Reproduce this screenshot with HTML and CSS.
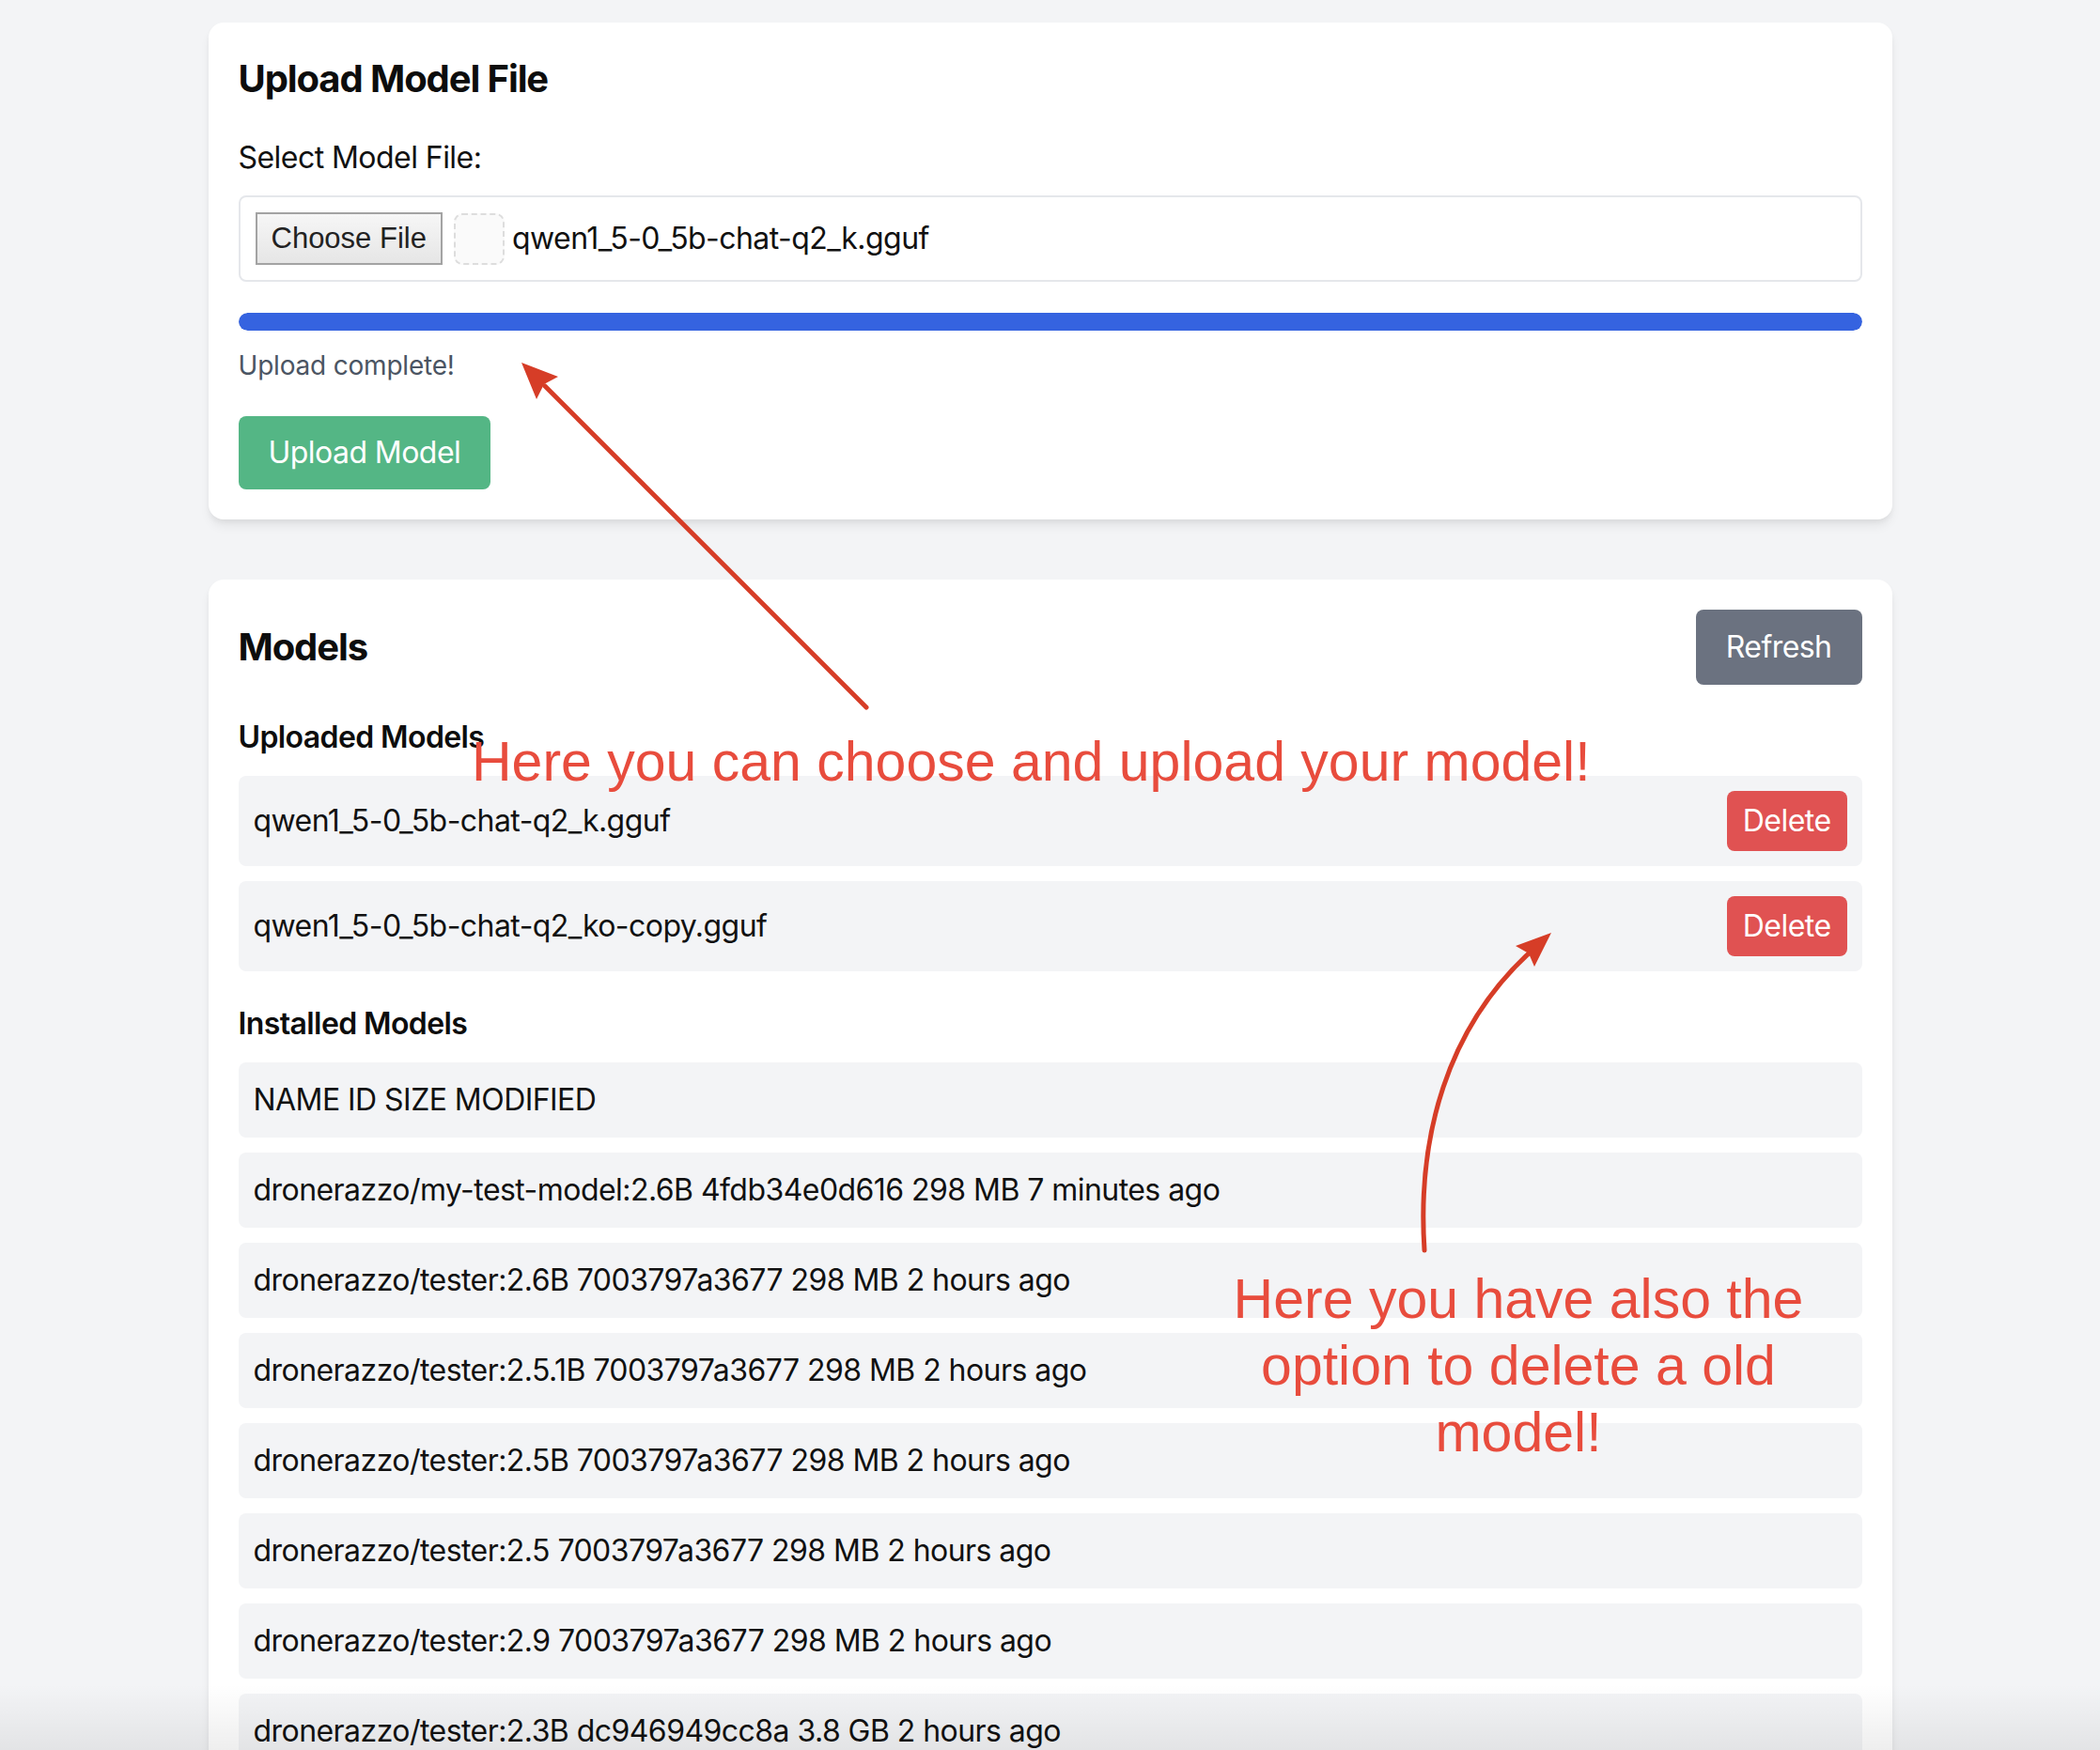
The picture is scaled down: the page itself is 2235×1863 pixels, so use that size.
FILE: index.html
```html
<!DOCTYPE html>
<html lang="en">
<head>
<meta charset="utf-8">
<title>Model Manager</title>
<link rel="stylesheet" href="styles.css">
</head>
<body>
<main class="container">
  <section class="card card-upload">
    <h2 class="card-title">Upload Model File</h2>
    <label class="field-label">Select Model File:</label>
    <div class="file-input">
      <span class="file-btn">Choose File</span>
      <span class="file-icon"></span>
      <span class="file-name">qwen1_5-0_5b-chat-q2_k.gguf</span>
    </div>
    <div class="progress"><div class="progress-fill" style="width:100%"></div></div>
    <p class="status">Upload complete!</p>
    <button class="btn btn-green">Upload Model</button>
  </section>

  <section class="card card-models">
    <div class="card-header">
      <h2 class="card-title">Models</h2>
      <button class="btn btn-gray">Refresh</button>
    </div>

    <div class="section">
      <h3 class="section-title">Uploaded Models</h3>
      <ul class="list">
        <li class="row row-action"><span>qwen1_5-0_5b-chat-q2_k.gguf</span><button class="btn-delete">Delete</button></li>
        <li class="row row-action"><span>qwen1_5-0_5b-chat-q2_ko-copy.gguf</span><button class="btn-delete">Delete</button></li>
      </ul>
    </div>

    <div class="section">
      <h3 class="section-title">Installed Models</h3>
      <ul class="list">
        <li class="row">NAME ID SIZE MODIFIED</li>
        <li class="row">dronerazzo/my-test-model:2.6B 4fdb34e0d616 298 MB 7 minutes ago</li>
        <li class="row">dronerazzo/tester:2.6B 7003797a3677 298 MB 2 hours ago</li>
        <li class="row">dronerazzo/tester:2.5.1B 7003797a3677 298 MB 2 hours ago</li>
        <li class="row">dronerazzo/tester:2.5B 7003797a3677 298 MB 2 hours ago</li>
        <li class="row">dronerazzo/tester:2.5 7003797a3677 298 MB 2 hours ago</li>
        <li class="row">dronerazzo/tester:2.9 7003797a3677 298 MB 2 hours ago</li>
        <li class="row">dronerazzo/tester:2.3B dc946949cc8a 3.8 GB 2 hours ago</li>
        <li class="row">dronerazzo/tester:2.3 dc946949cc8a 3.8 GB 2 hours ago</li>
      </ul>
    </div>
  </section>
</main>

<div class="annotations">
  <svg class="arrows" width="2235" height="1863" viewBox="0 0 2235 1863" xmlns="http://www.w3.org/2000/svg">
    <path d="M922 753 L580 411" fill="none" stroke="#d63d27" stroke-width="5" stroke-linecap="round"/>
    <polygon points="555,386 594,401 579,409 571,425" fill="#d63d27"/>
    <path d="M1516 1331 C1508 1210 1540 1095 1628 1014" fill="none" stroke="#d63d27" stroke-width="5" stroke-linecap="round"/>
    <polygon points="1651,993 1633,1029 1627,1015 1613,1007" fill="#d63d27"/>
  </svg>
  <div class="note note-upload">Here you can choose and upload your model!</div>
  <div class="note note-delete">Here you have also the<br>option to delete a old<br>model!</div>
</div>
<div class="bottom-fade"></div>
</body>
</html>
```

FILE: styles.css
```css
html, body {
  margin: 0;
  padding: 0;
  overflow: hidden;
}

body {
  background: #f3f4f6;
  font-family: "Inter", "Liberation Sans", sans-serif;
  color: #111111;
  font-size: 32px;
  line-height: 48px;
  letter-spacing: -0.55px;
  position: relative;
  height: 1863px;
}

.container {
  width: 1792px;
  margin: 0 auto;
  padding-top: 24px;
}

.card {
  background: #ffffff;
  border-radius: 16px;
  padding: 32px;
  box-shadow: 0 8px 12px -2px rgba(0, 0, 0, 0.08), 0 3px 7px -2px rgba(0, 0, 0, 0.06);
}

.card-upload {
  margin-bottom: 64px;
}

.card-title {
  margin: 0 0 32px 0;
  font-size: 40px;
  line-height: 56px;
  font-weight: 700;
  letter-spacing: -1.1px;
  color: #0d0d0d;
}

.field-label {
  display: block;
  margin-bottom: 16px;
  font-size: 32px;
  line-height: 48px;
}

.file-input {
  display: flex;
  align-items: center;
  border: 2px solid #e5e7eb;
  border-radius: 8px;
  padding: 16px;
}

.file-btn {
  font-family: "Liberation Sans", sans-serif;
  font-size: 31px;
  letter-spacing: 0;
  line-height: 52px;
  padding: 0 15px;
  border: 2px solid #a3a3a3;
  background: linear-gradient(#f6f6f6, #e6e6e6);
  color: #222222;
}

.file-icon {
  width: 50px;
  height: 51px;
  margin-left: 12px;
  border: 2px dashed #dddddd;
  border-radius: 9px;
  background: #fafafa;
}

.file-name {
  margin-left: 8px;
}

.progress {
  margin-top: 33px;
  height: 19px;
  border-radius: 10px;
  background: #e5e7eb;
  overflow: hidden;
}

.progress-fill {
  height: 100%;
  background: #3563e0;
  border-radius: 10px;
}

.status {
  margin: 17px 0 0 0;
  font-size: 28px;
  line-height: 40px;
  color: #4b5563;
  letter-spacing: -0.2px;
}

.btn {
  font: inherit;
  letter-spacing: -0.55px;
  border: none;
  border-radius: 8px;
  color: #ffffff;
  padding: 0 32px;
}

.btn-green {
  margin-top: 34px;
  height: 78px;
  background: #54b685;
  display: block;
}

.btn-gray {
  height: 80px;
  background: #6b7280;
}

.card-header {
  display: flex;
  justify-content: space-between;
  align-items: center;
  margin-bottom: 32px;
}

.card-header .card-title {
  margin: 0;
}

.section {
  margin-bottom: 32px;
}

.section-title {
  margin: 0 0 17px 0;
  font-size: 32px;
  line-height: 48px;
  font-weight: 600;
  letter-spacing: -0.6px;
  color: #0d0d0d;
}

.list {
  list-style: none;
  margin: 0;
  padding: 0;
  display: flex;
  flex-direction: column;
  gap: 16px;
}

.row {
  background: #f3f4f6;
  border-radius: 8px;
  padding: 16px;
}

.row-action {
  display: flex;
  justify-content: space-between;
  align-items: center;
}

.btn-delete {
  font: inherit;
  letter-spacing: -0.55px;
  border: none;
  border-radius: 8px;
  background: #e05252;
  color: #ffffff;
  padding: 8px 17px;
}

.annotations {
  position: absolute;
  top: 0;
  left: 0;
  width: 2235px;
  height: 1863px;
  pointer-events: none;
}

.arrows {
  position: absolute;
  top: 0;
  left: 0;
}

.note {
  position: absolute;
  font-family: "Liberation Sans", Arial, sans-serif;
  font-size: 59px;
  letter-spacing: 0;
  color: #e84c3d;
  white-space: nowrap;
}

.note-upload {
  left: 502px;
  top: 782px;
  line-height: 59px;
}

.note-delete {
  left: 1266px;
  width: 700px;
  top: 1348px;
  line-height: 71px;
  text-align: center;
}

.bottom-fade {
  position: absolute;
  left: 0;
  right: 0;
  bottom: 0;
  height: 70px;
  background: linear-gradient(rgba(0, 0, 0, 0), rgba(0, 0, 0, 0.065));
  pointer-events: none;
}
```
